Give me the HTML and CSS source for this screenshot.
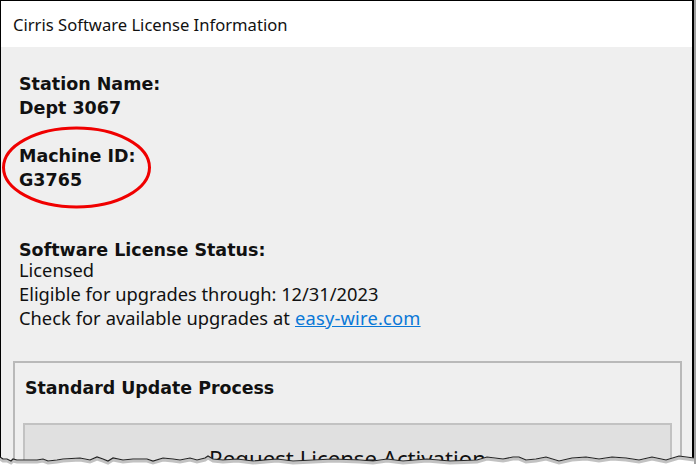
FILE: index.html
```html
<!DOCTYPE html>
<html lang="en">
<head>
    <meta charset="UTF-8">
    <title>Cirris Software License Information</title>
    <link rel="stylesheet" href="styles.css">
</head>
<body>
<div class="window">
    <div class="title">Cirris Software License Information</div>
    <div class="content">
        <div class="info">
            <b>Station Name:</b>
            <b>Dept 3067</b>
        </div>
        <div class="info">
            <b>Machine ID:</b>
            <b>G3765</b>
        </div>
        <div class="status">
            <b class="status-head">Software License Status:</b>
            <p>Licensed</p>
            <p>Eligible for upgrades through: 12/31/2023</p>
            <p class="check">Check for available upgrades at <a href="#">easy-wire.com</a></p>
        </div>
        <div class="group">
            <h2>Standard Update Process</h2>
            <div class="big-btn">Request License Activation</div>
        </div>
    </div>
</div>
<!-- red callout round the machine id -->
<svg class="callout" width="156" height="88" viewBox="0 0 156 88">
    <ellipse cx="76.500" cy="43.500" rx="73" ry="39.500" fill="none" stroke="#f00000" stroke-width="3"/>
</svg>
<!-- torn bottom edge of the screenshot -->
<svg class="torn" width="699" height="22" viewBox="0 0 699 22">
    <path class="torn-paper" d="M0 11 L3 13 L7 13 L11 15 L13 13 L17 14 L37 14 L43 13 L48 15 L57 14 L63 13 L80 12 L90 14 L97 11 L103 13 L108 15 L113 12 L123 14 L133 13 L147 13 L153 15 L163 12 L173 13 L180 14 L190 12 L197 14 L205 12 L208 10 L213 13 L223 14 L237 13 L253 15 L277 13 L293 15 L313 14 L333 13 L360 14 L373 15 L387 13 L403 15 L427 13 L450 15 L477 14 L487 11 L503 13 L513 11 L519 11 L526 14 L536 13 L546 11 L559 15 L572 12 L586 11 L599 13 L612 11 L626 12 L639 14 L652 11 L666 14 L679 10 L694 12 L694 22 L0 22 Z"/>
    <path class="torn-shade" d="M0 11 L3 13 L7 13 L11 15 L13 13 L17 14 L37 14 L43 13 L48 15 L57 14 L63 13 L80 12 L90 14 L97 11 L103 13 L108 15 L113 12 L123 14 L133 13 L147 13 L153 15 L163 12 L173 13 L180 14 L190 12 L197 14 L205 12 L208 10 L213 13 L223 14 L237 13 L253 15 L277 13 L293 15 L313 14 L333 13 L360 14 L373 15 L387 13 L403 15 L427 13 L450 15 L477 14 L487 11 L503 13 L513 11 L519 11 L526 14 L536 13 L546 11 L559 15 L572 12 L586 11 L599 13 L612 11 L626 12 L639 14 L652 11 L666 14 L679 10 L694 12"/>
    <path class="torn-line" d="M0 11 L3 13 L7 13 L11 15 L13 13 L17 14 L37 14 L43 13 L48 15 L57 14 L63 13 L80 12 L90 14 L97 11 L103 13 L108 15 L113 12 L123 14 L133 13 L147 13 L153 15 L163 12 L173 13 L180 14 L190 12 L197 14 L205 12 L208 10 L213 13 L223 14 L237 13 L253 15 L277 13 L293 15 L313 14 L333 13 L360 14 L373 15 L387 13 L403 15 L427 13 L450 15 L477 14 L487 11 L503 13 L513 11 L519 11 L526 14 L536 13 L546 11 L559 15 L572 12 L586 11 L599 13 L612 11 L626 12 L639 14 L652 11 L666 14 L679 10 L694 12"/>
</svg>
</body>
</html>
```
FILE: styles.css
```css
* {
    margin: 0;
    padding: 0;
    box-sizing: border-box;
}

body {
    width: 699px;
    height: 468px;
    background-color: #fff;
    overflow: hidden;
    position: relative;
    font-family: "Noto Sans", "Liberation Sans", sans-serif;
    font-size: 18.300px;
    color: #111;
}

.window {
    width: 694px;
    height: 464px;
    border: 1px solid #000;
    border-right: 2px solid #000;
    box-shadow: 2px 0 0 #a0a0a0;
    background-color: #efefef;
    overflow: hidden;
}

.title {
    height: 46px;
    background-color: #fff;
    padding-left: 12px;
    line-height: 48px;
    font-size: 16.600px;
}

.content {
    padding: 25px 10px 0 12px;
}

b {
    display: block;
    font-family: "DejaVu Sans", sans-serif;
    font-size: 17.500px;
    font-weight: bold;
}

.info {
    padding-left: 6px;
    line-height: 24px;
    margin-bottom: 24px;
}

.status {
    padding-left: 6px;
    margin-top: 48px;
}

.status-head {
    line-height: 20px;
}

.status p {
    line-height: 20px;
    margin-bottom: 4px;
}

.check {
    word-spacing: 0.300px;
}

.status a {
    color: #0a78d7;
    letter-spacing: 0.200px;
}

.group {
    margin-top: 33px;
    height: 140px;
    border: 2px solid #b9b9b9;
    padding: 13px 8px 0;
}

.group h2 {
    font-family: "DejaVu Sans", sans-serif;
    font-size: 17.400px;
    line-height: 24px;
    padding-left: 2px;
}

.big-btn {
    margin-top: 23px;
    height: 80px;
    border: 2px solid #c2c2c2;
    background-color: #e0e0e0;
    padding-top: 18px;
    text-align: center;
    font-size: 22.200px;
}

.callout {
    position: absolute;
    left: 0;
    top: 124px;
}

.torn {
    position: absolute;
    left: 0;
    top: 446px;
}

.torn-paper {
    fill: #fff;
}

.torn-shade {
    fill: none;
    stroke: #999;
    stroke-width: 3;
    transform: translateY(2px);
    opacity: 0.6;
}

.torn-line {
    fill: none;
    stroke: #222;
    stroke-width: 1.200;
}
```
